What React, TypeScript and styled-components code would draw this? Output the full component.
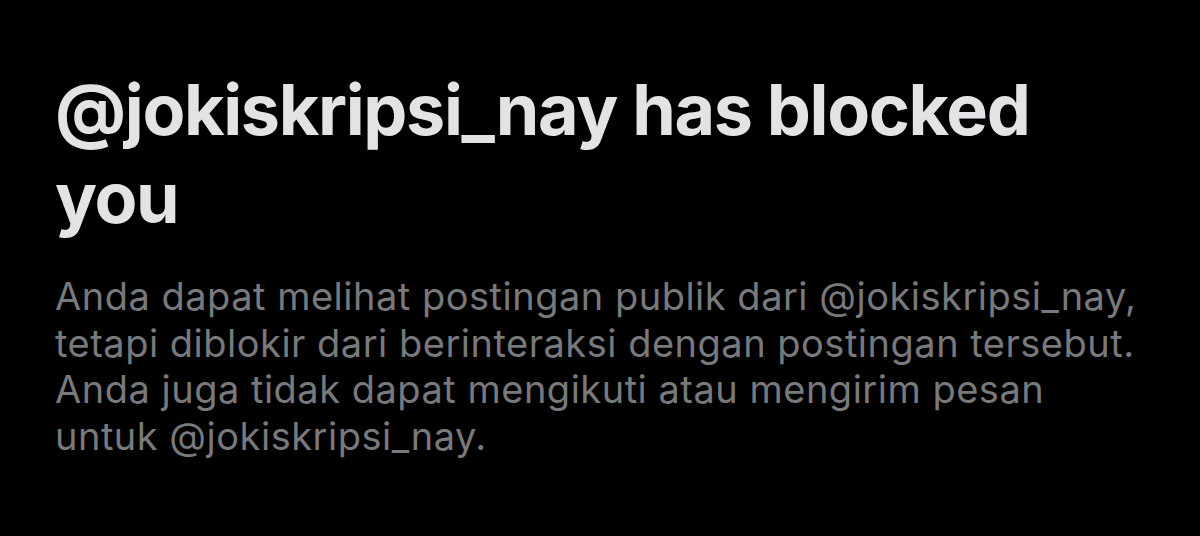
import styled, { createGlobalStyle } from 'styled-components';

const GlobalStyle = createGlobalStyle`
  html, body {
    margin: 0;
    padding: 0;
    background: #000000;
  }
  body {
    font-family: Inter, "Noto Sans", "Liberation Sans", sans-serif;
    -webkit-font-smoothing: antialiased;
  }
`;

const Screen = styled.div`
  box-sizing: border-box;
  width: 1200px;
  height: 536px;
  padding: 66px 40px 0 55px;
  background: #000000;
  overflow: hidden;
`;

const Box = styled.div`
  display: flex;
  flex-direction: column;
  gap: 31px;
  max-width: 1100px;
`;

const Title = styled.h1`
  margin: 0;
  max-width: 1060px;
  color: #e2e3e4;
  font-size: 70px;
  font-weight: 700;
  line-height: 88px;
  letter-spacing: -1.35px;
  word-break: break-word;
`;

const Description = styled.p`
  margin: 0;
  color: #77797c;
  font-size: 38px;
  font-weight: 400;
  line-height: 46.5px;
  letter-spacing: 0.5px;
`;

function BlockedNotice({ handle = 'jokiskripsi_nay' }) {
  return (
    <Box>
      <Title>@{handle} has blocked you</Title>
      <Description>
        Anda dapat melihat postingan publik dari @{handle}, tetapi diblokir dari berinteraksi dengan
        postingan tersebut. Anda juga tidak dapat mengikuti atau mengirim pesan untuk @{handle}.
      </Description>
    </Box>
  );
}

export default function App() {
  return (
    <>
      <GlobalStyle />
      <Screen>
        <BlockedNotice />
      </Screen>
    </>
  );
}
